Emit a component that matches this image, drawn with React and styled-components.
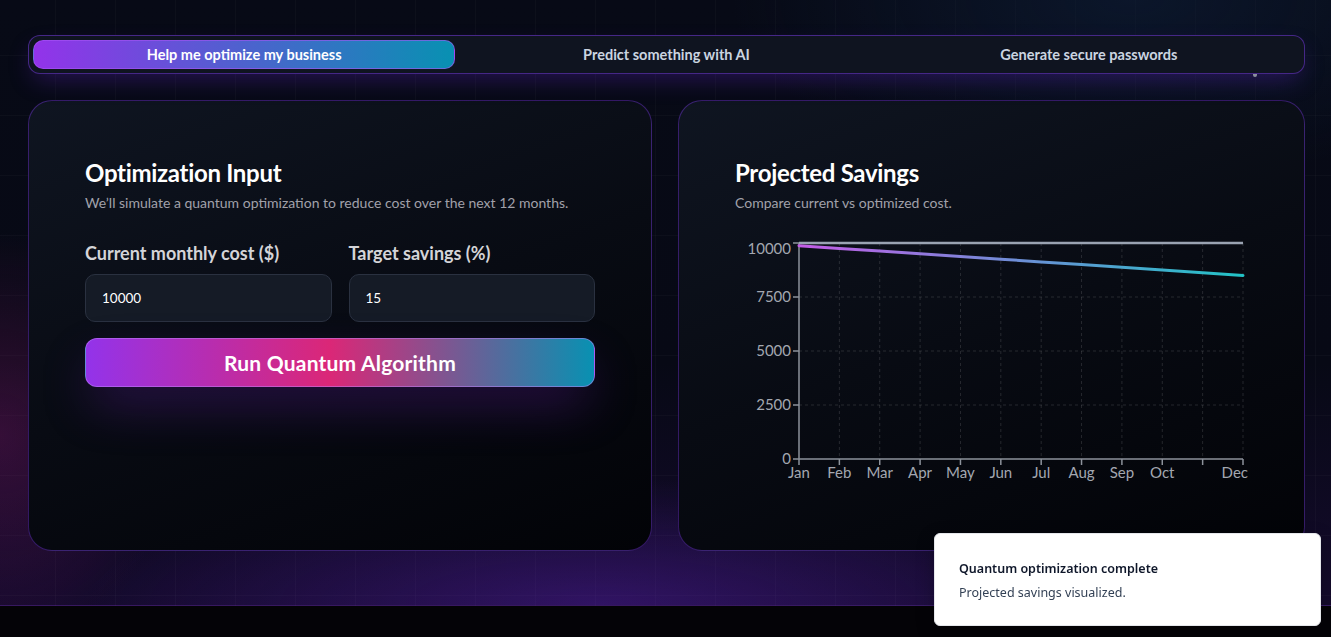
import React from 'react'
import styled, { createGlobalStyle } from 'styled-components'

const GlobalStyle = createGlobalStyle`
  html, body {
    margin: 0;
    padding: 0;
    background: #040307;
  }
  body {
    font-family: Lato, "Noto Sans", "Liberation Sans", sans-serif;
    color: #f8fafc;
  }
  * { box-sizing: border-box; }
`

const Page = styled.div`
  min-height: 606px;
  padding: 35px 26px 0 28px;
  border-bottom: 1px solid rgba(147, 51, 234, 0.35);
  background:
    radial-gradient(ellipse 55% 30% at 45% 100%, rgba(91, 33, 182, 0.4), transparent 70%),
    radial-gradient(ellipse 18% 45% at 0% 72%, rgba(131, 24, 107, 0.35), transparent 75%),
    radial-gradient(ellipse 40% 40% at 85% 0%, rgba(14, 30, 56, 0.6), transparent 75%),
    linear-gradient(rgba(255, 255, 255, 0.025) 1px, transparent 1px) 0 -5px / 60px 60px,
    linear-gradient(90deg, rgba(255, 255, 255, 0.025) 1px, transparent 1px) -5px 0 / 60px 60px,
    linear-gradient(180deg, #070a16 0%, #070915 60%, #140a2c 100%);
`

const TabBar = styled.div`
  position: relative;
  display: grid;
  grid-template-columns: repeat(3, 1fr);
  height: 39px;
  padding: 4px;
  border: 1px solid rgba(124, 58, 237, 0.5);
  border-radius: 12px;
  background: #0f1420;
  box-shadow: 0 10px 24px -6px rgba(109, 40, 217, 0.35);

  &::after {
    content: '';
    position: absolute;
    right: 47px;
    bottom: -4px;
    width: 4px;
    height: 3px;
    border-radius: 0 0 2px 2px;
    background: #8b8f9c;
  }
`

const Tab = styled.button`
  border: ${p => (p.$active ? '1px solid rgba(168, 85, 247, 0.6)' : 'none')};
  border-radius: 10px;
  font-family: inherit;
  font-size: 14.5px;
  font-weight: 700;
  color: ${p => (p.$active ? '#ffffff' : '#cbd5e1')};
  background: ${p =>
    p.$active ? 'linear-gradient(90deg, #9333ea 0%, #0891b2 100%)' : 'transparent'};
  cursor: pointer;
`

const Panels = styled.div`
  display: grid;
  grid-template-columns: 1fr 1fr;
  gap: 26px;
  margin-top: 26px;
`

const Card = styled.section`
  height: 451px;
  padding: 56px 56px 0 56px;
  border: 1px solid rgba(124, 58, 237, 0.4);
  border-radius: 24px;
  background: linear-gradient(160deg, #0f1521 0%, #080b13 50%, #020307 100%);
`

const Title = styled.h2`
  margin: 0;
  font-size: 24px;
  line-height: 32px;
  font-weight: 700;
  letter-spacing: -0.3px;
  color: #ffffff;
`

const Subtitle = styled.p`
  margin: 4px 0 0;
  font-size: 14px;
  line-height: 20px;
  color: #a1a1aa;
`

const Fields = styled.div`
  display: grid;
  grid-template-columns: 1fr 1fr;
  gap: 17px;
  margin-top: 28px;
`

const Field = styled.label`
  display: flex;
  flex-direction: column;
  gap: 9px;
`

const Label = styled.span`
  font-size: 18px;
  line-height: 24px;
  font-weight: 700;
  color: #d4d4d8;
`

const Input = styled.input`
  height: 48px;
  padding: 0 16px;
  border: 1px solid #2a3140;
  border-radius: 10px;
  background: #151b26;
  color: #ffffff;
  font-family: inherit;
  font-size: 13.5px;
  outline: none;
`

const RunButton = styled.button`
  width: 100%;
  height: 49px;
  margin-top: 16px;
  border: 1px solid rgba(192, 132, 252, 0.5);
  border-radius: 12px;
  background: linear-gradient(90deg, #9333ea 0%, #db2777 48%, #0891b2 100%);
  color: #ffffff;
  font-family: inherit;
  font-size: 21px;
  font-weight: 700;
  letter-spacing: 0.2px;
  box-shadow: 0 22px 50px -8px rgba(126, 34, 206, 0.35);
  cursor: pointer;
`

const ChartBox = styled.div`
  margin-top: 20px;
  width: 513px;

  svg {
    overflow: visible;
  }
`

const Toast = styled.div`
  position: fixed;
  right: 10px;
  bottom: 11px;
  width: 387px;
  height: 93px;
  padding: 26px 24px 0;
  border: 1px solid #e5e7eb;
  border-radius: 6px;
  background: #ffffff;
  box-shadow: 0 6px 18px rgba(0, 0, 0, 0.25);
`

const ToastTitle = styled.div`
  font-family: "Noto Sans", "Open Sans", sans-serif;
  font-size: 12.5px;
  line-height: 18px;
  font-weight: 600;
  color: #0f172a;
`

const ToastText = styled.div`
  margin-top: 6px;
  font-family: "Noto Sans", "Open Sans", sans-serif;
  font-size: 12.5px;
  line-height: 18px;
  color: #334155;
`

const months = ['Jan', 'Feb', 'Mar', 'Apr', 'May', 'Jun', 'Jul', 'Aug', 'Sep', 'Oct', 'Nov', 'Dec']

function SavingsChart({ cost, savings }) {
  const left = 64
  const right = 508
  const top = 10
  const bottom = 226
  const max = 10000
  const xs = i => left + ((right - left) * i) / 11
  const ys = v => bottom - ((bottom - top) * v) / max
  const optimized = months.map((m, i) => cost * (1 - (savings / 100) * ((i + 1) / 12)))
  const path = optimized.map((v, i) => `${i ? 'L' : 'M'}${xs(i).toFixed(1)},${ys(v).toFixed(1)}`).join(' ')
  const yTicks = [0, 2500, 5000, 7500, 10000]

  return (
    <svg width="513" height="250" viewBox="0 0 513 250">
      <defs>
        <linearGradient id="optLine" x1="0" x2="1" y1="0" y2="0">
          <stop offset="0%" stopColor="#c45ce6" />
          <stop offset="50%" stopColor="#6c8fd6" />
          <stop offset="100%" stopColor="#22c3c6" />
        </linearGradient>
      </defs>
      <g stroke="rgba(255,255,255,0.13)" strokeDasharray="3 3" strokeWidth="1">
        {yTicks.slice(1, 4).map(t => (
          <line key={t} x1={left} x2={right} y1={ys(t)} y2={ys(t)} />
        ))}
        {months.map((m, i) => i > 0 && <line key={m} x1={xs(i)} x2={xs(i)} y1={top} y2={bottom} />)}
      </g>
      <g stroke="#8d929b" strokeWidth="1.5">
        <line x1={left} x2={left} y1={top} y2={bottom} />
        <line x1={left} x2={right} y1={bottom} y2={bottom} />
        {yTicks.map(t => (
          <line key={t} x1={left - 6} x2={left} y1={ys(t)} y2={ys(t)} />
        ))}
        {months.map((m, i) => (
          <line key={m} x1={xs(i)} x2={xs(i)} y1={bottom} y2={bottom + 6} />
        ))}
      </g>
      <g fill="#a3a7b0" fontSize="15" fontFamily="Lato, 'Noto Sans', sans-serif">
        {yTicks.map(t => (
          <text key={t} x={left - 8} y={t === max ? ys(t) + 11 : ys(t) + 5} textAnchor="end">
            {t}
          </text>
        ))}
        {months.map((m, i) => {
          if (m === 'Nov') return null
          const last = i === months.length - 1
          return (
            <text key={m} x={last ? right + 5 : xs(i)} y={bottom + 19} textAnchor={last ? 'end' : 'middle'}>
              {m}
            </text>
          )
        })}
      </g>
      <line x1={left} x2={right} y1={ys(cost)} y2={ys(cost)} stroke="#9aa3b2" strokeWidth="2.5" />
      <path d={path} fill="none" stroke="url(#optLine)" strokeWidth="3" strokeLinecap="round" />
    </svg>
  )
}

export default function App() {
  const tabs = ['Help me optimize my business', 'Predict something with AI', 'Generate secure passwords']

  return (
    <>
      <GlobalStyle />
      <Page>
        <TabBar>
          {tabs.map((t, i) => (
            <Tab key={t} $active={i === 0}>
              {t}
            </Tab>
          ))}
        </TabBar>
        <Panels>
          <Card>
            <Title>Optimization Input</Title>
            <Subtitle>We’ll simulate a quantum optimization to reduce cost over the next 12 months.</Subtitle>
            <Fields>
              <Field>
                <Label>Current monthly cost ($)</Label>
                <Input defaultValue="10000" />
              </Field>
              <Field>
                <Label>Target savings (%)</Label>
                <Input defaultValue="15" />
              </Field>
            </Fields>
            <RunButton>Run Quantum Algorithm</RunButton>
          </Card>
          <Card>
            <Title>Projected Savings</Title>
            <Subtitle>Compare current vs optimized cost.</Subtitle>
            <ChartBox>
              <SavingsChart cost={10000} savings={15} />
            </ChartBox>
          </Card>
        </Panels>
      </Page>
      <Toast>
        <ToastTitle>Quantum optimization complete</ToastTitle>
        <ToastText>Projected savings visualized.</ToastText>
      </Toast>
    </>
  )
}
